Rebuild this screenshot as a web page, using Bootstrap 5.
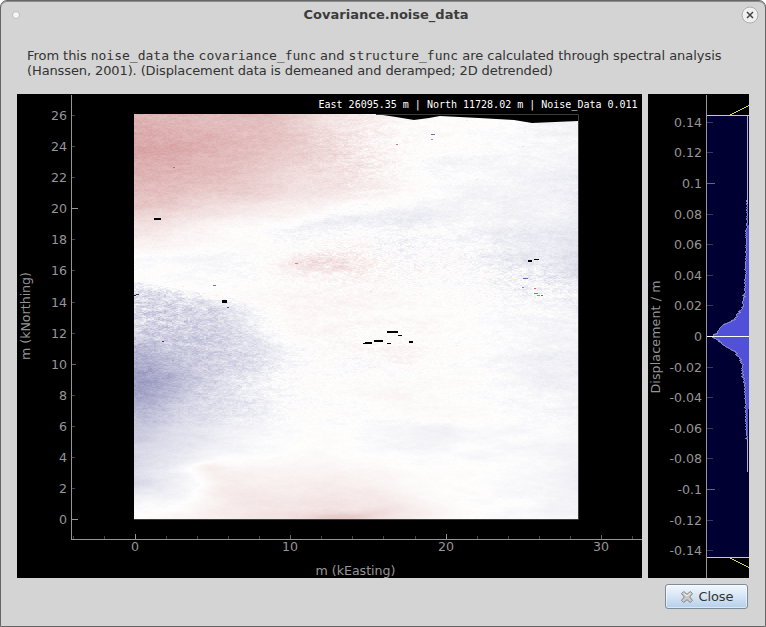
<!DOCTYPE html>
<html lang="en">
<head>
<meta charset="utf-8">
<title>Covariance.noise_data</title>
<meta name="viewport" content="width=device-width, initial-scale=1">
<link href="https://cdn.jsdelivr.net/npm/bootstrap@5.3.0/dist/css/bootstrap.min.css" rel="stylesheet">
<style>
body{font-family:"DejaVu Sans",sans-serif;font-size:13px;color:#333;background:#fff}
.dialog-frame{width:766px;height:627px;background:#d4d4d4;border:1px solid #666;border-radius:7px 7px 0 0;overflow:hidden;box-shadow:inset 0 1px #8c8c8c}
.title-row{height:27px;padding:0 6px 0 11px}
.title-text{font-size:13px;line-height:27px;color:#3c3c3c;padding-left:11px}
.menu-dot{width:8px;height:8px;border-radius:50%;background:#f5f5f5;border:1px solid #bdbdbd}
.intro{padding:20px 0 0 26px;line-height:15px;height:66px;white-space:nowrap}
.intro code{font-family:"DejaVu Sans Mono",monospace;font-size:13px;color:inherit}
.run-a{letter-spacing:-.05px}
.run-b{letter-spacing:-.03px}
.run-c{letter-spacing:-.11px}
.plots{padding-left:16px;gap:6px}
.plot-box{background:#000;height:484px}
.plot-box svg{display:block}
.map-box{width:625px}
.hist-box{width:101px}
.map-canvas{left:117px;top:20px}
.readout{right:4.4px;top:4px;font:10px/13px "DejaVu Sans Mono",monospace;color:#fff;white-space:pre}
svg text{font-family:"DejaVu Sans",sans-serif;font-size:12.6px;fill:#969696}
.actions{padding:6px 17px 0 0}
.close-btn{width:83px;height:25px;font-size:13px;line-height:1;color:#333;border:1px solid #7d8b9c;border-radius:3px;background:linear-gradient(#f2f7fc,#d6e5f4 50%,#b4cfeb);box-shadow:inset 0 0 0 1px rgba(255,255,255,.5);gap:5px}
.close-btn span{letter-spacing:-.1px}
</style>
<script src="https://cdn.jsdelivr.net/npm/bootstrap@5.3.0/dist/js/bootstrap.bundle.min.js"></script>
</head>
<body>
<main class="dialog-frame d-flex flex-column">
  <header class="title-row d-flex align-items-center justify-content-between">
    <span class="menu-dot"></span>
    <span class="title-text fw-bold">Covariance.noise_data</span>
    <svg width="18" height="18" viewBox="0 0 18 18" role="img" aria-label="Close window"><circle cx="9" cy="9" r="8" fill="#f0f0f0" stroke="#adadad"/><path d="M6 6l6 6M12 6l-6 6" stroke="#444" stroke-width="1.5"/></svg>
  </header>
  <div class="intro"><span class="run-a">From this </span><code>noise_data</code><span> the </span><code>covariance_func</code><span class="run-b"> and </span><code>structure_func</code><span class="run-b"> are calculated through spectral analysis</span><br><span class="run-c">(Hanssen, 2001). (Displacement data is demeaned and deramped; 2D detrended)</span></div>
  <section class="plots d-flex">
    <div class="plot-box map-box position-relative">
      <svg id="mapAxes" width="625" height="484"></svg>
      <canvas id="noiseMap" class="map-canvas position-absolute" width="444" height="405"></canvas>
      <div class="readout position-absolute">East 26095.35 m | North 11728.02 m | Noise_Data 0.011</div>
    </div>
    <div class="plot-box hist-box"><svg id="histogram" width="101" height="484"></svg></div>
  </section>
  <footer class="actions d-flex justify-content-end">
    <button type="button" class="btn close-btn d-flex align-items-center justify-content-center p-0 me-0">
      <svg width="14" height="14" viewBox="0 0 14 14"><path d="M3.7 1.5L7 4.3l3.3-2.8 2.2 2.2L9.7 7l2.8 3.3-2.2 2.2L7 9.7l-3.3 2.8-2.2-2.2L4.3 7 1.5 3.7z" fill="#c9c9c9" stroke="#858585" stroke-linejoin="round"/><path d="M3.7 3.3L7 6l3.3-2.7" fill="none" stroke="#f3f3f3"/></svg>
      <span>Close</span>
    </button>
  </footer>
</main>
<script>
// Axes of the displacement map
const line=(x1,y1,x2,y2,c)=>`<path d="M${x1} ${y1}L${x2} ${y2}" stroke="${c}" fill="none" shape-rendering="crispEdges"/>`;
let a=line(54.5,1,54.5,446,'#969696')+line(54,445.5,625,445.5,'#969696');
for(let v=0;v<=26;v+=2){
  const y=Math.round(425-v*15.535)+.5, major=v%20===0;
  a+=line(55,y,major?61:v===10?59:58,y,major?'#969696':v===10?'#666':'#444');
  a+=`<text x="50" y="${y+4}" text-anchor="end">${v}</text>`;
}
for(let v=-4;v<=32;v+=2){
  const x=Math.round(118+v*15.53)+.5, major=v===0||v===20, mid=v===10||v===30;
  a+=line(x,major?440:mid?441:442,x,445,major?'#969696':mid?'#666':'#444');
  if(major||mid)a+=`<text x="${x-.5}" y="457" text-anchor="middle">${v}</text>`;
}
a+='<text x="338.5" y="481" text-anchor="middle">m (kEasting)</text><text transform="translate(13 222) rotate(-90)" text-anchor="middle" textLength="88">m (kNorthing)</text>';
a+='<path d="M117 425.5H561.5V20.5H360" fill="none" stroke="#3c3c3c"/>';
document.getElementById('mapAxes').innerHTML=a;

// Noise field: coarse displacement samples, positive is red and negative is blue
const grid=[
[.78,.72,.7,.66,.6,.46,.2,.05,.04,.03,-.01,-.04,-.08],
[.9,.82,.74,.64,.52,.36,.2,.06,.0,-.03,-.06,-.07,-.08],
[.66,.62,.54,.42,.3,.26,.14,.04,-.03,-.06,-.08,-.09,-.14],
[.22,.22,.12,.02,-.03,-.07,-.09,-.09,-.06,-.06,-.07,-.09,-.12],
[0,-.02,-.04,-.04,.03,.1,.08,-.01,-.01,-.03,-.1,-.17,-.2],
[0,.01,-.0,.01,.05,.06,.06,.04,.01,0,-.02,-.06,-.1],
[-.14,-.1,-.12,-.05,.03,.05,.05,.05,.02,0,-.05,-.08,-.08],
[-.5,-.38,-.24,-.14,-.03,.01,0,.01,.01,-.01,-.04,-.11,-.1],
[-.42,-.3,-.24,-.14,-.07,-.01,-.01,.03,.03,0,-.01,-.04,-.09],
[-.34,-.2,-.12,-.06,0,.02,-.02,-.06,-.06,-.03,-.04,-.05,-.09],
[-.28,-.06,.14,.18,.16,.18,.12,.04,0,0,-.02,-.05,-.12],
[0,.06,.16,.26,.32,.4,.36,.24,.14,.06,0,-.03,-.07]];
let seed=7;
const rnd=()=>{seed=(seed*1664525+1013904223)>>>0;return seed/4294967296};
const smooth=t=>t*t*(3-2*t), clamp=t=>Math.max(0,Math.min(1,t));
const bump=(x,y,cx,cy,rx,ry)=>Math.exp(-(((x-cx)/rx)**2)-(((y-cy)/ry)**2));
const table=Array.from({length:4096},rnd);
const hash=(x,y)=>table[(x*37+y*911)&4095];
function streak(x,y){const i=Math.floor(x),j=Math.floor(y),u=smooth(x-i),v=smooth(y-j);
 return (hash(i,j)*(1-u)+hash(i+1,j)*u)*(1-v)+(hash(i,j+1)*(1-u)+hash(i+1,j+1)*u)*v-.5}
// [x, y, radius x, radius y, amplitude]
const blobs=[[0,270,60,32,-.26],[0,205,60,40,-.12],[95,205,45,25,-.1],[75,240,50,30,-.1],[200,147,32,10,.18],[165,148,20,8,.1],
[215,398,38,6,.22],[60,357,24,6,.15],[250,104,70,9,-.06],[300,315,60,7,-.06],[320,42,35,5,-.06],[410,130,45,20,-.04],[260,236,40,12,.04],[250,283,40,6,.04],[425,155,30,20,-.06]];
const cv=document.getElementById('noiseMap'),cx=cv.getContext('2d');
for(let y=0;y<405;y++)for(let x=0;x<444;x+=2){
  const wx=x+streak(x/60+9,y/34)*44,wy=y+streak(x/70,y/30+5)*16;
  const gx=Math.max(0,Math.min(11.999,wx/37)),gy=Math.max(0,Math.min(10.999,wy/36.8)),i=gx|0,j=gy|0,u=gx-i,w=gy-j;
  let v=(grid[j][i]*(1-u)+grid[j][i+1]*u)*(1-w)+(grid[j+1][i]*(1-u)+grid[j+1][i+1]*u)*w;
  const edge=167+x*.17;
  const below=x<190?clamp((y-edge)/10):1;
  for(const b of blobs){const d=((wx-b[0])/b[2])**2+((wy-b[1])/b[3])**2;if(d<6)v+=b[4]*Math.exp(-d)*(b[4]<0?below:1)}
  v-=.25*below*clamp(1-(y-edge)/85)*clamp((160-x)/110);
  let amp=.04+Math.abs(v)*.09;
  if(y>edge&&y<260)amp+=.17*clamp((150-x)/110)*clamp((260-y)/50);
  amp+=.09*bump(x,y,105,265,65,40)+.13*bump(x,y,205,147,65,28)+.1*bump(x,y,300,145,80,30);
  amp+=.14*bump(x,y,400,172,50,20)+.12*bump(x,y,225,38,50,40)+.07*bump(x,y,240,235,70,28);
  if(y>310)amp*=.5;
  v+=(rnd()-.5)*amp+streak(x/38,y/9)*.06+streak(x/13,y/3.3)*(.03+amp*.3)+streak(x/5,y/1.9)*amp*1.1;
  if(rnd()<.0012&&(y<190&&x>180||y>170&&y<250))v+=(rnd()-.5)*.4;
  const p=clamp(Math.abs(v));
  cx.fillStyle=v>0?`rgb(${254-42*p},${254-100*p},${253-98*p})`:`rgb(${254-128*p},${254-128*p},${254-78*p})`;
  cx.fillRect(x,y,2,1);
}
// Cells without data
cx.fillStyle='#000';
cx.beginPath();cx.moveTo(242,0);cx.lineTo(262,3);cx.lineTo(280,6);cx.lineTo(295,4);cx.lineTo(306,2);cx.lineTo(345,4);cx.lineTo(380,6);cx.lineTo(398,9);cx.lineTo(444,7);cx.lineTo(444,0);cx.fill();
[[20,104,7,2],[88,186,5,3],[394,146,4,2],[400,145,5,1],[253,217,11,2],[264,221,4,1],[240,226,9,2],[231,228,7,2],[229,229,3,1],[253,229,4,1],[275,227,4,2]].forEach(r=>cx.fillRect(...r));
cx.fillStyle='#3c3c3c';cx.fillRect(242,0,202,1);
// Isolated strong pixels
[[0,181,2,'#252768'],[2,180,3,'#36387a'],[93,193,2,'#555379'],[79,171,3,'#7778aa'],[28,227,2,'#363747'],[39,53,2,'#bf6670'],[161,149,3,'#d98587'],[297,20,4,'#7070b0'],[297,25,2,'#9999c6'],[262,30,2,'#d27678'],[389,164,5,'#6668a8'],[400,174,2,'#ce6769'],[400,179,4,'#c86167'],[403,181,3,'#ce777a'],[407,181,2,'#65679f'],[388,173,2,'#8887b9']].forEach(([x,y,w,c])=>{cx.fillStyle=c;cx.fillRect(x,y,w,1)});

// Histogram of displacement values
let h='<rect x="59" y="21" width="42" height="442" fill="#000032"/>';
const prof=[[128,98],[155,97.5],[180,97],[200,96],[212,94],[217,91],[222,88],[225,86],[228,81],[231,74],[234,72],[237,70],[240,66],[243,64],[246,70],[250,75],[254,81],[257,86],[262,90],[268,93],[283,94],[288,96],[325,97.5],[345,98]];
const pts=['99.5 21','99.5 105'];
for(let y=105;y<345;y++){let x=98.5;for(let k=0;k<prof.length-1;k++)if(y>=prof[k][0]&&y<=prof[k+1][0])x=prof[k][1]+(prof[k+1][1]-prof[k][1])*(y-prof[k][0])/(prof[k+1][0]-prof[k][0]);x+=(rnd()-.5)*(x<96?3:1.5);pts.push(`${Math.min(99,Math.round(x))+.5} ${y+.5}`)}
pts.push('99.5 345','99.5 378');
h+=`<path d="M${pts.join('L')}L100 378V105Z" fill="#5050d8"/><path d="M${pts.join('L')}" fill="none" stroke="#a8a8dc"/>`;
h+=line(99.5,21,99.5,110,'#aaaadc')+line(99.5,345,99.5,378,'#aaaadc')+line(100.5,131,100.5,315,'#5050d8');
h+='<path d="M59 21.5H101M81 21.5L101 11.5M59 463.5H101M81 463.5L101 473.5" stroke="#d5d565" fill="none" shape-rendering="crispEdges"/>';
h+=line(58.5,1,58.5,484,'#969696');
for(let k=-7;k<=7;k++){const y=Math.round(242-k*30.6)+.5;
 h+=line(59,y,k%5?65:67,y,k%5?'#3a3a5c':'#67677c');
 h+=`<text x="54" y="${y+4}" text-anchor="end">${k*2/100}</text>`}
h+=line(59,242.5,101,242.5,'#ffffff');
h+='<text transform="translate(12 243) rotate(-90)" text-anchor="middle" textLength="113">Displacement / m</text>';
document.getElementById('histogram').innerHTML=h;
</script>
</body>
</html>
